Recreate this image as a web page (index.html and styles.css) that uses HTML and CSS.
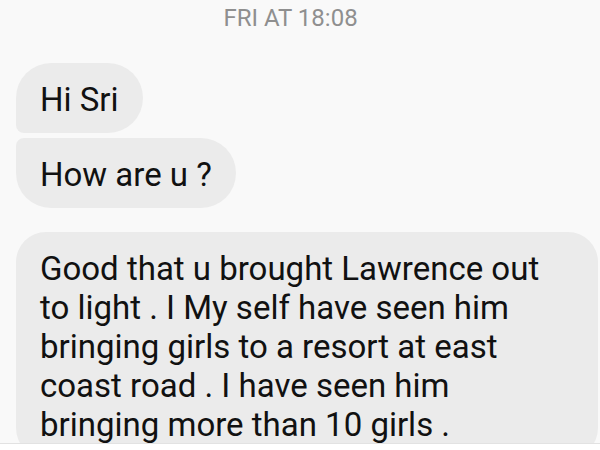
FILE: index.html
```html
<!DOCTYPE html>
<html>
<head>
    <title>Messages</title>
    <link rel="stylesheet" href="styles.css">
</head>
<body>
    <div class="thread">
        <div class="date">FRI AT 18:08</div>

        <!-- Incoming messages, grouped -->
        <div class="messages">
            <div class="bubble first">Hi Sri</div>
            <div class="bubble last">How are u ?</div>
            <div class="bubble long">Good that u brought Lawrence out to light . I My self have seen him bringing girls to a resort at east coast road . I have seen him bringing more than 10 girls .</div>
        </div>
    </div>
    <div class="composer"></div>
</body>
</html>
```

FILE: styles.css
```css
body {
    margin: 0;
    font-family: Roboto, "Liberation Sans", sans-serif;
    background-color: #f9f9f9;
    color: #111111;
}
.thread {
    height: 443px;
    overflow: hidden;
}
.date {
    text-align: center;
    font-size: 24px;
    line-height: 28px;
    padding-top: 4px;
    padding-right: 19px;
    color: #8f8f8f;
}
.messages {
    display: flex;
    flex-direction: column;
    align-items: flex-start;
    gap: 5px;
    padding: 31px 0 0 16px;
}
.bubble {
    font-size: 33px;
    line-height: 39px;
    padding: 17px 24px 14px 24px;
    background-color: #ebebeb;
    border-radius: 35px;
}
.first {
    border-bottom-left-radius: 8px;
}
.last {
    border-top-left-radius: 8px;
}
.long {
    margin-top: 19px;
    width: 520px;
    padding-right: 38px;
    border-radius: 30px;
}
.composer {
    height: 7px;
    background-color: #ffffff;
    border-top: 1px solid #e2e2e2;
}
```
